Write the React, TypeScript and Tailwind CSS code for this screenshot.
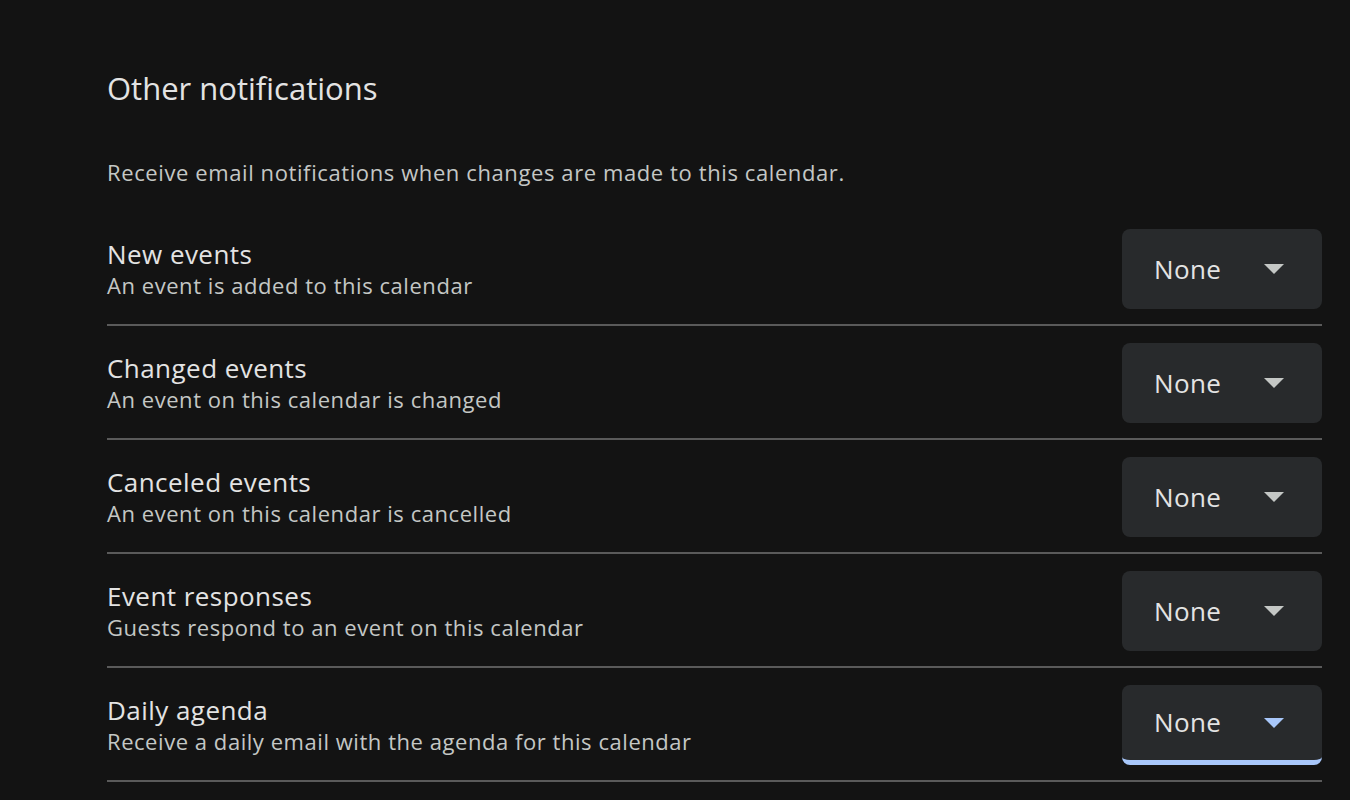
type Row = { title: string; desc: string; focused?: boolean };

const rows: Row[] = [
  { title: "New events", desc: "An event is added to this calendar" },
  { title: "Changed events", desc: "An event on this calendar is changed" },
  { title: "Canceled events", desc: "An event on this calendar is cancelled" },
  { title: "Event responses", desc: "Guests respond to an event on this calendar" },
  { title: "Daily agenda", desc: "Receive a daily email with the agenda for this calendar", focused: true },
];

const Select = ({ focused }: { focused?: boolean }) => (
  <div
    className={`relative flex h-[80px] w-[200px] shrink-0 items-center overflow-hidden rounded-lg bg-[#282a2c] pl-[32px] ${
      focused ? "border-b-[5px] border-[#a8c7fa]" : ""
    }`}
  >
    <span className="text-[26px] tracking-[0.4px] text-[#e3e3e3]">None</span>
    <svg
      className="absolute right-[38px] top-1/2 -translate-y-1/2"
      width="20"
      height="10"
      viewBox="0 0 20 10"
    >
      <path d="M0 0 L20 0 L10 10 Z" fill={focused ? "#a8c7fa" : "#c4c7c5"} />
    </svg>
  </div>
);

export default function App() {
  return (
    <div
      className="min-h-screen bg-[#131313] pl-[107px] pr-[28px] pt-[67px]"
      style={{ fontFamily: "'Open Sans', Roboto, sans-serif" }}
    >
      <h2 className="text-[31px] leading-[42px] text-[#e3e3e3]">Other notifications</h2>
      <p className="mt-[48px] text-[22px] leading-[30px] tracking-[0.6px] text-[#c4c7c5]">
        Receive email notifications when changes are made to this calendar.
      </p>
      <div className="mt-[42px]">
        {rows.map((r, i) => (
          <div
            key={r.title}
            className={`flex items-center justify-between border-b-2 border-[#5a5a5a] pb-[15px] ${
              i === 0 ? "pt-[0px]" : "pt-[17px]"
            }`}
          >
            <div className="flex flex-col">
              <span className="text-[26px] leading-[32px] tracking-[0.45px] text-[#e3e3e3]">{r.title}</span>
              <span className="text-[22px] leading-[30px] tracking-[0.55px] text-[#c4c7c5]">{r.desc}</span>
            </div>
            <Select focused={r.focused} />
          </div>
        ))}
      </div>
    </div>
  );
}
